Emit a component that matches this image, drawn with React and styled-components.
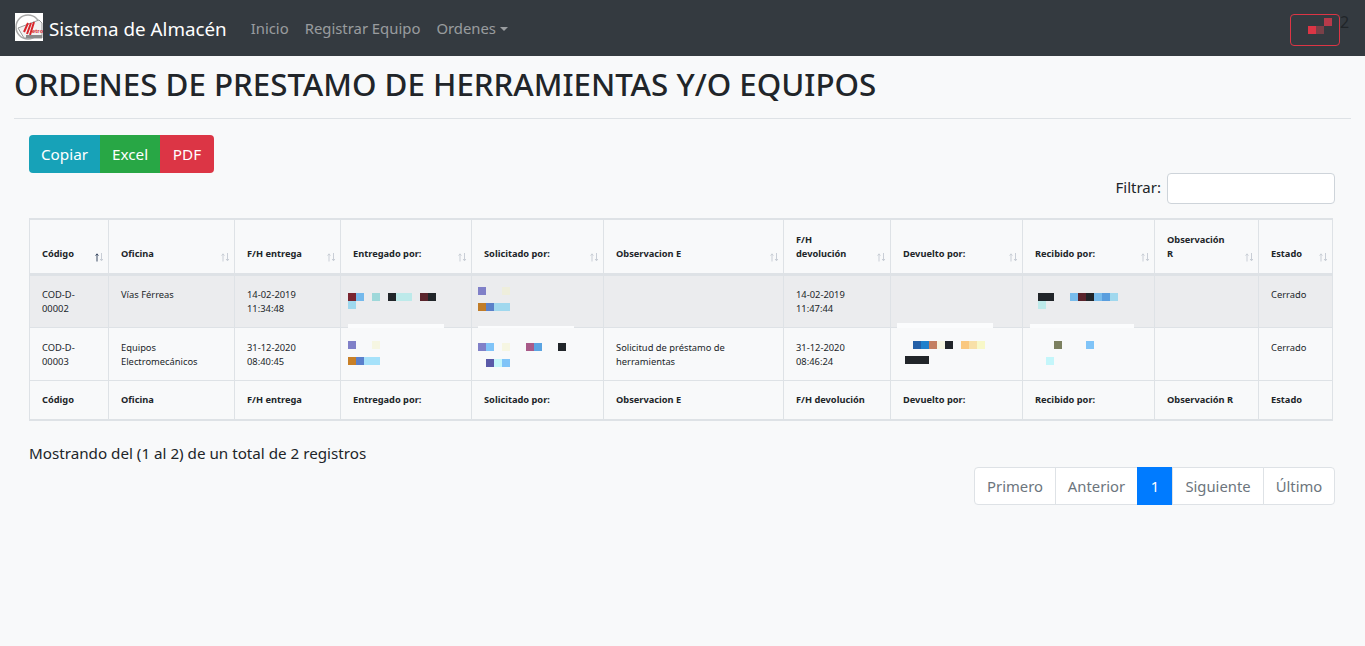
import React from "react";
import styled, { createGlobalStyle } from "styled-components";

const FONT = `"Noto Sans", "Open Sans", "Liberation Sans", sans-serif`;

const Global = createGlobalStyle`
  html, body { margin: 0; padding: 0; background: #f8f9fa; }
  body { font-family: ${FONT}; color: #212529; font-size: 16px; line-height: 1.5; }
  * { box-sizing: border-box; }
`;

const Page = styled.div`
  min-height: 646px;
  background: #f8f9fa;
`;

const Navbar = styled.nav`
  height: 56px;
  background: #343a40;
  display: flex;
  align-items: center;
  padding: 2px 25px 0 15px;
`;

const Brand = styled.div`
  display: flex;
  align-items: center;
  gap: 6px;
  color: #fff;
  font-size: 18.8px;
  margin-right: 16px;
  svg { margin-bottom: 4px; }
`;

const NavLink = styled.span`
  color: rgba(255, 255, 255, 0.5);
  font-size: 14.85px;
  padding: 0 8px 2px;
`;

const Caret = styled.i`
  display: inline-block;
  margin-left: 4px;
  vertical-align: 3px;
  border-top: 4.8px solid;
  border-left: 4.8px solid transparent;
  border-right: 4.8px solid transparent;
`;

const Alert = styled.div`
  margin-left: auto;
  align-self: flex-start;
  position: relative;
  width: 50px;
  height: 32px;
  margin-top: 12px;
  border: 1px solid #dc3545;
  border-radius: 4px;
`;

const Count = styled.span`
  position: absolute;
  left: 49px;
  top: -5px;
  color: #212529;
  font-size: 16px;
`;

const AlertPixels = styled.div`
  position: absolute;
  left: 17px;
  top: 3px;
`;

const Main = styled.main`
  padding: 6px 14px 0;
`;

const Title = styled.h1`
  margin: 0;
  font-size: 31.27px;
  font-weight: 500;
  line-height: 44px;
  padding-bottom: 12px;
  border-bottom: 1px solid #dee2e6;
`;

const Content = styled.section`
  padding: 16px 16px 0 15px;
`;

const ButtonGroup = styled.div`
  display: flex;
  width: max-content;
`;

const ExportButton = styled.button`
  font: inherit;
  width: ${(p) => p.$w}px;
  height: 38px;
  padding: 0;
  border: 0;
  color: #fff;
  background: ${(p) => p.$bg};
  font-size: 15.3px;
  &:first-child { border-radius: 4px 0 0 4px; }
  &:last-child { border-radius: 0 4px 4px 0; }
`;

const FilterRow = styled.div`
  display: flex;
  justify-content: flex-end;
  align-items: center;
  gap: 6px;
  height: 31px;
  font-size: 15px;
`;

const FilterLabel = styled.span`
  margin-bottom: 2px;
`;

const FilterInput = styled.input`
  width: 168px;
  height: 31px;
  border: 1px solid #ced4da;
  border-radius: 4px;
  background: #fff;
`;

const Table = styled.table`
  border-collapse: collapse;
  table-layout: fixed;
  width: 1303px;
  margin-top: 14px;
  font-size: 9.35px;
  line-height: 14px;
  border: 1px solid #dee2e6;
  border-top: 2px solid #dee2e6;
  border-bottom: 2px solid #dee2e6;
`;

const Th = styled.th`
  position: relative;
  text-align: left;
  font-weight: 700;
  font-size: 9.25px;
  padding: ${(p) => (p.$foot ? "1px 12px 0" : "0 12px 12px")};
  height: ${(p) => (p.$foot ? "40px" : "55px")};
  vertical-align: ${(p) => (p.$foot ? "middle" : "bottom")};
  border: 1px solid #dee2e6;
  border-bottom-width: ${(p) => (p.$foot ? "1px" : "3px")};
`;

const Td = styled.td`
  position: relative;
  padding: ${(p) => (p.$top !== undefined ? `${p.$top}px 6px 0` : `${p.$text || 12}px 12px 0`)};
  height: 53px;
  vertical-align: top;
  border: 1px solid #dee2e6;
`;

const Row = styled.tr`
  background: ${(p) => (p.$shaded ? "#ebecee" : "transparent")};
`;

const SortIcon = styled.svg`
  position: absolute;
  right: 4px;
  bottom: 11px;
`;

const Pixels = styled.div`
  display: flex;
  height: 8px;
  margin-left: ${(p) => p.$x || 0}px;
  margin-bottom: ${(p) => p.$gap ?? 8}px;
`;

const Pixel = styled.i`
  display: block;
  width: ${(p) => p.$w || 8}px;
  height: 8px;
  background: ${(p) => p.$c || "transparent"};
`;

const WhiteBar = styled.div`
  position: absolute;
  left: ${(p) => p.$l}px;
  width: ${(p) => p.$w}px;
  bottom: -1px;
  height: ${(p) => p.$h}px;
  background: #fbfcfd;
`;

const Footer = styled.div`
  padding-top: 20px;
  font-size: 15.2px;
  line-height: 24px;
`;

const Pager = styled.div`
  display: flex;
  justify-content: flex-end;
  margin-top: 2px;
`;

const PageItem = styled.span`
  width: ${(p) => p.$w}px;
  height: 38px;
  display: flex;
  align-items: center;
  justify-content: center;
  margin-left: -1px;
  border: 1px solid ${(p) => (p.$active ? "#007bff" : "#dee2e6")};
  background: ${(p) => (p.$active ? "#007bff" : "#fff")};
  color: ${(p) => (p.$active ? "#fff" : "#6c757d")};
  font-size: 14.8px;
  &:first-child { border-radius: 4px 0 0 4px; }
  &:last-child { border-radius: 0 4px 4px 0; }
`;

const Logo = () => (
  <svg width="28" height="28" viewBox="0 0 28 28">
    <rect width="28" height="28" fill="#fff" />
    <circle cx="13" cy="14" r="12" fill="none" stroke="#a8a8a8" strokeWidth="1.5" />
    <path d="M3 15 L24 7 L27 10 V25 H9 Z" fill="#f2f2f2" stroke="#999" strokeWidth="1" />
    <path d="M9 19 L13 10 M12 21 L16 10 M15 22 L19 9" stroke="#d8262c" strokeWidth="2" fill="none" />
    <text x="17" y="20" fontSize="6" fontWeight="700" fill="#d8262c" fontFamily="Liberation Sans, sans-serif">etro</text>
    <rect x="11" y="22" width="16" height="3" fill="#8a8a8a" />
  </svg>
);

const SortArrows = ({ active }) => (
  <SortIcon width="9" height="9" viewBox="0 0 9 9" fill="none" strokeWidth="1">
    <path d="M2 8.5V1M.6 2.6 2 .8l1.4 1.8" stroke={active ? "#3b4a63" : "#c9ced6"} />
    <path d="M6.5 0V7.6M5.1 6 6.5 7.8 7.9 6" stroke="#c9ced6" />
  </SortIcon>
);

const cols = [
  { w: 79, t: "Código", active: true },
  { w: 126, t: "Oficina" },
  { w: 106, t: "F/H entrega" },
  { w: 131, t: "Entregado por:" },
  { w: 132, t: "Solicitado por:" },
  { w: 180, t: "Observacion E" },
  { w: 107, t: "F/H devolución", h: <>F/H<br />devolución</> },
  { w: 132, t: "Devuelto por:" },
  { w: 132, t: "Recibido por:" },
  { w: 104, t: "Observación R", h: <>Observación<br />R</> },
  { w: 74, t: "Estado" },
];

const Strip = ({ x, gap, cells }) => (
  <Pixels $x={x} $gap={gap}>
    {cells.map((c, i) =>
      Array.isArray(c) ? <Pixel key={i} $c={c[0]} $w={c[1]} /> : <Pixel key={i} $c={c} />
    )}
  </Pixels>
);

export default function App() {
  return (
    <Page>
      <Global />
      <Navbar>
        <Brand><Logo />Sistema de Almacén</Brand>
        <NavLink>Inicio</NavLink>
        <NavLink>Registrar Equipo</NavLink>
        <NavLink>Ordenes<Caret /></NavLink>
        <Alert>
          <AlertPixels>
            <Strip x={16} gap={0} cells={["#b73a4a"]} />
            <Strip gap={0} cells={["#dc3545", "#7a4048"]} />
          </AlertPixels>
          <Count>2</Count>
        </Alert>
      </Navbar>
      <Main>
        <Title>ORDENES DE PRESTAMO DE HERRAMIENTAS Y/O EQUIPOS</Title>
        <Content>
          <ButtonGroup>
            <ExportButton $bg="#17a2b8" $w={71}>Copiar</ExportButton>
            <ExportButton $bg="#28a745" $w={60}>Excel</ExportButton>
            <ExportButton $bg="#dc3545" $w={54}>PDF</ExportButton>
          </ButtonGroup>
          <FilterRow><FilterLabel>Filtrar:</FilterLabel><FilterInput /></FilterRow>
          <Table>
            <colgroup>{cols.map((c) => <col key={c.t} width={c.w} />)}</colgroup>
            <thead>
              <tr>
                {cols.map((c) => (
                  <Th key={c.t}>
                    {c.h || c.t}
                    <SortArrows active={c.active} />
                  </Th>
                ))}
              </tr>
            </thead>
            <tbody>
              <Row $shaded>
                <Td>COD-D-<br />00002</Td>
                <Td>Vías Férreas</Td>
                <Td>14-02-2019<br />11:34:48</Td>
                <Td $top={17}>
                  <Strip gap={0} x={1} cells={["#7a2530", "#74b9ec", null, "#9ed8da", null, "#212529", ["#bdeaea", 16], null, "#5a242c", "#212529"]} />
                  <Strip x={1} gap={0} cells={["#9ed8ee"]} />
                  <WhiteBar $l={7} $w={96} $h={4} />
                </Td>
                <Td $top={11}>
                  <Strip cells={["#8080c8", null, null, "#eeeedc"]} />
                  <Strip gap={0} cells={["#c07c28", "#5a80c8", ["#a0d8ee", 16]]} />
                  <WhiteBar $l={6} $w={96} $h={2} />
                </Td>
                <Td />
                <Td>14-02-2019<br />11:47:44</Td>
                <Td><WhiteBar $l={6} $w={96} $h={5} /></Td>
                <Td $top={17}>
                  <Strip gap={0} x={9} cells={[["#212529", 16], null, null, "#78bcec", "#5a242c", "#212529", "#78bcec", "#5a9ede", "#a0d8ee"]} />
                  <Strip x={9} gap={0} cells={["#bdeaea"]} />
                  <WhiteBar $l={7} $w={104} $h={4} />
                </Td>
                <Td />
                <Td>Cerrado</Td>
              </Row>
              <Row>
                <Td $text={13}>COD-D-<br />00003</Td>
                <Td $text={13}>Equipos<br />Electromecánicos</Td>
                <Td $text={13}>31-12-2020<br />08:40:45</Td>
                <Td $top={13}>
                  <Strip x={1} cells={["#8080c8", null, null, "#f6f6e2"]} />
                  <Strip x={1} gap={0} cells={["#c88028", "#5a80cc", ["#a6e2fa", 16]]} />
                </Td>
                <Td $top={15}>
                  <Strip cells={["#8080c8", "#80c4f8", null, "#f6f6e2", null, null, "#a85a88", "#5aa4e2", null, null, "#212529"]} />
                  <Strip gap={0} x={8} cells={["#5a5aa8", "#c4f6fa", "#80c4f8"]} />
                </Td>
                <Td $text={13}>Solicitud de préstamo de<br />herramientas</Td>
                <Td $text={13}>31-12-2020<br />08:46:24</Td>
                <Td $top={13}>
                  <Strip x={16} gap={7} cells={["#2460a8", "#2080cc", "#c48060", "#f6f6e2", "#212529", null, "#fac880", "#f8e0a8", "#f8f8c8"]} />
                  <Strip gap={0} x={8} cells={[["#212529", 24]]} />
                </Td>
                <Td $top={13}>
                  <Strip x={25} cells={["#7c8060", null, null, null, "#80c4f8"]} />
                  <Strip gap={0} x={17} cells={["#c4f6fa"]} />
                </Td>
                <Td />
                <Td $text={13}>Cerrado</Td>
              </Row>
              <tr>
                {cols.map((c) => <Th key={c.t} $foot>{c.t}</Th>)}
              </tr>
            </tbody>
          </Table>
          <Footer>Mostrando del (1 al 2) de un total de 2 registros</Footer>
          <Pager>
            <PageItem $w={82}>Primero</PageItem>
            <PageItem $w={83}>Anterior</PageItem>
            <PageItem $w={36} $active>1</PageItem>
            <PageItem $w={92}>Siguiente</PageItem>
            <PageItem $w={72}>Último</PageItem>
          </Pager>
        </Content>
      </Main>
    </Page>
  );
}
